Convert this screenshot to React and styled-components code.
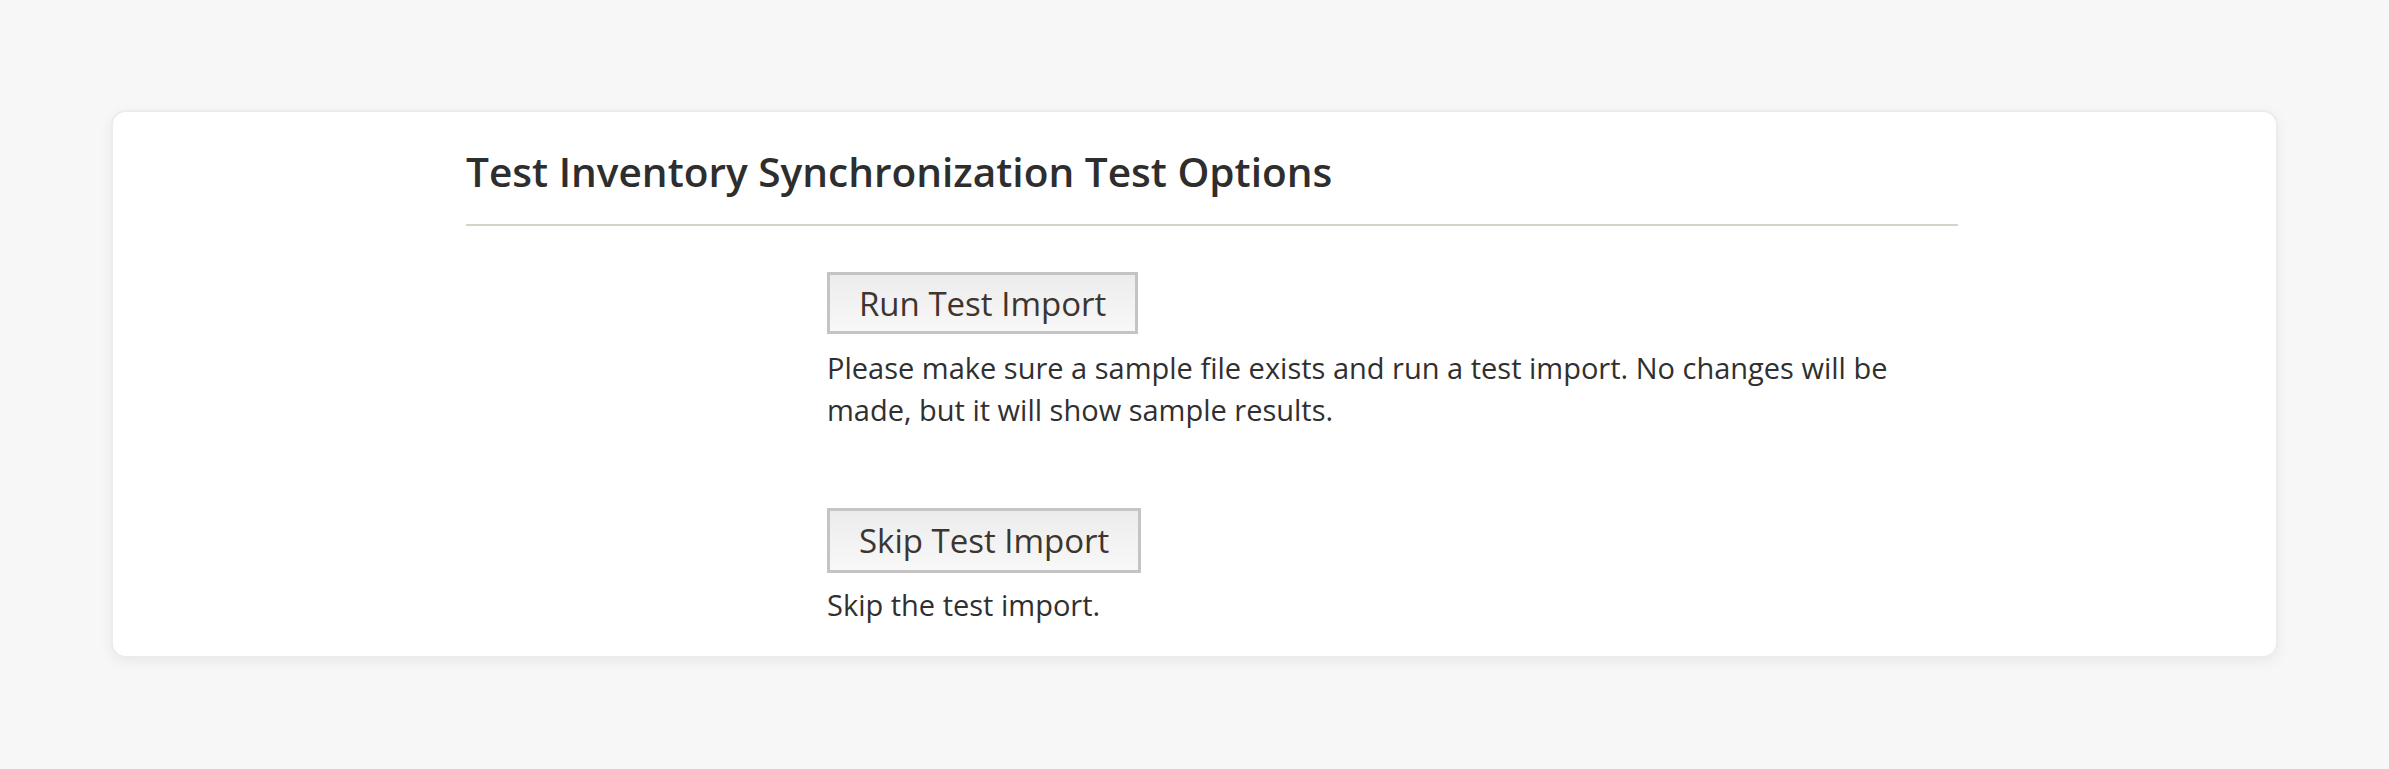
import React from "react";
import styled, { createGlobalStyle } from "styled-components";

const GlobalStyle = createGlobalStyle`
  html, body {
    margin: 0;
    padding: 0;
    background: #f7f7f7;
  }
  body {
    font-family: "Open Sans", "Liberation Sans", sans-serif;
    color: #303030;
  }
`;

const Page = styled.div`
  min-height: 769px;
  padding: 110px 111px 0 111px;
  box-sizing: border-box;
`;

const Card = styled.section`
  background: #fff;
  border: 2px solid #ececec;
  border-radius: 15px;
  box-shadow: 0 4px 14px rgba(0, 0, 0, 0.06);
  height: 548px;
  box-sizing: border-box;
  padding: 35px 318px 0 353px;
`;

const Title = styled.h2`
  margin: 0;
  font-size: 40.6px;
  font-weight: 600;
  line-height: 50px;
  color: #2e2e2e;
  padding-bottom: 27px;
  border-bottom: 2px solid #d6d2c5;
`;

const Options = styled.div`
  padding: 46px 0 0 361px;
  display: flex;
  flex-direction: column;
  gap: 77px;
`;

const Option = styled.div`
  display: flex;
  flex-direction: column;
  align-items: flex-start;
`;

const Button = styled.button`
  font-family: inherit;
  font-size: 33px;
  color: #3d3530;
  height: ${(p) => p.$h || 62}px;
  padding: 0 29px;
  border: 3px solid #c4c4c4;
  background: linear-gradient(#ececec, #f8f8f8);
  cursor: pointer;
`;

const Note = styled.p`
  margin: ${(p) => p.$mt || 13}px 0 0;
  font-size: 29px;
  line-height: 42px;
  color: #303030;
  max-width: 1100px;
`;

export default function App() {
  return (
    <>
      <GlobalStyle />
      <Page>
        <Card>
          <Title>Test Inventory Synchronization Test Options</Title>
          <Options>
            <Option>
              <Button>Run Test Import</Button>
              <Note>
                Please make sure a sample file exists and run a test import. No changes will be
                made, but it will show sample results.
              </Note>
            </Option>
            <Option>
              <Button $h={65}>Skip Test Import</Button>
              <Note $mt={11}>Skip the test import.</Note>
            </Option>
          </Options>
        </Card>
      </Page>
    </>
  );
}
